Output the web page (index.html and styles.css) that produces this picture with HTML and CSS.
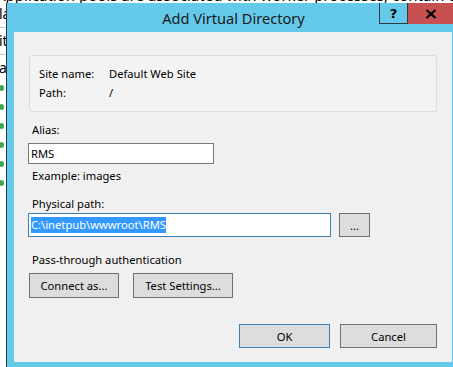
FILE: index.html
```html
<!DOCTYPE html>
<html lang="en">
<head>
  <meta charset="UTF-8">
  <title>Add Virtual Directory</title>
  <link rel="stylesheet" href="styles.css">
</head>
<body>
  <div class="desktop">
    <div class="behind">
      <div class="behind-top">
        <div class="behind-line">Application pools are associated with worker processes, contain one or more applications, and provide isolation</div>
      </div>
      <div class="behind-side">
        <div class="side-item">la</div>
        <div class="side-sep"></div>
        <div class="side-item">it</div>
        <div class="side-sep"></div>
        <div class="side-item">ar</div>
        <div class="tree">
          <div class="node"></div>
          <div class="node"></div>
          <div class="node"></div>
          <div class="node"></div>
          <div class="node"></div>
          <div class="node"></div>
        </div>
      </div>
    </div>

    <div class="window">
      <div class="titlebar">
        <span class="title">Add Virtual Directory</span>
        <div class="caption-buttons">
          <div class="cap-btn help">?</div>
          <div class="cap-btn close">
            <svg width="12" height="10" viewBox="0 0 12 10">
              <path d="M1.5 1 L10.5 9 M10.5 1 L1.5 9" stroke="#000" stroke-width="2.2" fill="none"/>
            </svg>
          </div>
        </div>
      </div>

      <div class="client">
        <div class="groupbox">
          <div class="info-row"><span class="info-label">Site name:</span><span>Default Web Site</span></div>
          <div class="info-row"><span class="info-label">Path:</span><span>/</span></div>
        </div>

        <div class="label alias-label">Alias:</div>
        <div class="textbox alias-box">RMS</div>
        <div class="label hint">Example: images</div>

        <div class="label path-label">Physical path:</div>
        <div class="path-row">
          <div class="textbox path-box focused"><span class="selected">C:\inetpub\wwwroot\RMS</span></div>
          <button class="btn browse">...</button>
        </div>

        <div class="label auth-label">Pass-through authentication</div>
        <div class="auth-row">
          <button class="btn connect">Connect as...</button>
          <button class="btn test">Test Settings...</button>
        </div>

        <div class="footer">
          <button class="btn ok default">OK</button>
          <button class="btn cancel">Cancel</button>
        </div>
      </div>
    </div>
  </div>
</body>
</html>
```

FILE: styles.css
```css
body {
  margin: 0;
  background-color: #ffffff;
  font-family: "Noto Sans", "Open Sans", sans-serif;
  font-size: 11.2px;
  color: #000;
  overflow: hidden;
}

.desktop {
  position: relative;
  width: 453px;
  height: 367px;
  overflow: hidden;
}

.behind {
  position: absolute;
  top: 0;
  left: 0;
  width: 100%;
  height: 100%;
}

.behind-top {
  height: 3px;
  overflow: hidden;
}

.behind-line {
  margin-top: -13px;
  margin-left: -4px;
  white-space: nowrap;
  font-size: 15px;
  line-height: 16px;
}

.behind-side {
  position: absolute;
  top: 5px;
  left: -1px;
  width: 8px;
  font-size: 14px;
}

.side-item {
  height: 18px;
  line-height: 18px;
}

.side-sep {
  height: 1px;
  margin: 4px 0;
  background-color: #c8c8c8;
}

.tree {
  padding-top: 8px;
  display: flex;
  flex-direction: column;
  gap: 13px;
}

.node {
  width: 5px;
  height: 6px;
  border-radius: 50%;
  background-color: #3aa84a;
}

.window {
  position: absolute;
  top: 3px;
  left: 6px;
  width: 453px;
  background-color: #65c9ea;
  border-left: 1px solid #2a3a44;
}

.titlebar {
  position: relative;
  height: 29px;
  display: flex;
  align-items: center;
  justify-content: center;
}

.title {
  font-size: 14.6px;
  color: #1a1a1a;
  margin-top: 1px;
}

.caption-buttons {
  position: absolute;
  top: 0;
  left: 372px;
  display: flex;
}

.cap-btn {
  height: 20px;
  display: flex;
  align-items: center;
  justify-content: center;
}

.help {
  width: 27px;
  border: 1px solid #2d3a42;
  border-top: none;
  font-family: "DejaVu Sans", sans-serif;
  font-weight: bold;
  font-size: 13px;
}

.close {
  width: 46px;
  height: 21px;
  background-color: #c75050;
}

.client {
  margin: 0 0 6px 7px;
  width: 438px;
  background-color: #f0f0f0;
  padding: 23px 15px 14px 14px;
  box-sizing: border-box;
  display: flex;
  flex-direction: column;
}

.groupbox {
  margin-left: 1px;
  height: 57px;
  box-sizing: border-box;
  border: 1px solid #dcdcdc;
  border-radius: 3px;
  background-color: #f3f3f3;
  padding: 8px 0 0 9px;
}

.info-row {
  display: flex;
  line-height: 19px;
}

.info-label {
  width: 70px;
}

.label {
  line-height: 16px;
  padding-left: 4px;
}

.alias-label {
  margin-top: 10px;
}

.textbox {
  box-sizing: border-box;
  background-color: #fff;
  border: 1px solid #7a7a7a;
  padding-left: 2px;
  display: flex;
  align-items: center;
}

.alias-box {
  margin-top: 5px;
  width: 186px;
  height: 21px;
}

.hint {
  margin-top: 4px;
}

.path-label {
  margin-top: 12px;
}

.path-row {
  margin-top: 1px;
  display: flex;
  gap: 8px;
}

.path-box {
  width: 303px;
  height: 24px;
}

.focused {
  border-color: #3c7fb1;
}

.selected {
  background-color: #3399ff;
  color: #fff;
  line-height: 16px;
}

.btn {
  font-family: inherit;
  font-size: 11.2px;
  color: #000;
  background-color: #dddddd;
  border: 1px solid #707070;
  padding: 0;
  box-sizing: border-box;
}

.browse {
  width: 31px;
  height: 24px;
}

.auth-label {
  margin-top: 15px;
}

.auth-row {
  margin-top: 5px;
  margin-left: 1px;
  display: flex;
  gap: 14px;
}

.connect {
  width: 90px;
  height: 25px;
}

.test {
  width: 100px;
  height: 25px;
}

.footer {
  margin-top: 26px;
  display: flex;
  justify-content: flex-end;
  gap: 10px;
}

.ok {
  width: 91px;
  height: 24px;
}

.cancel {
  width: 97px;
  height: 24px;
}

.default {
  border-color: #3c7fb1;
}
```
